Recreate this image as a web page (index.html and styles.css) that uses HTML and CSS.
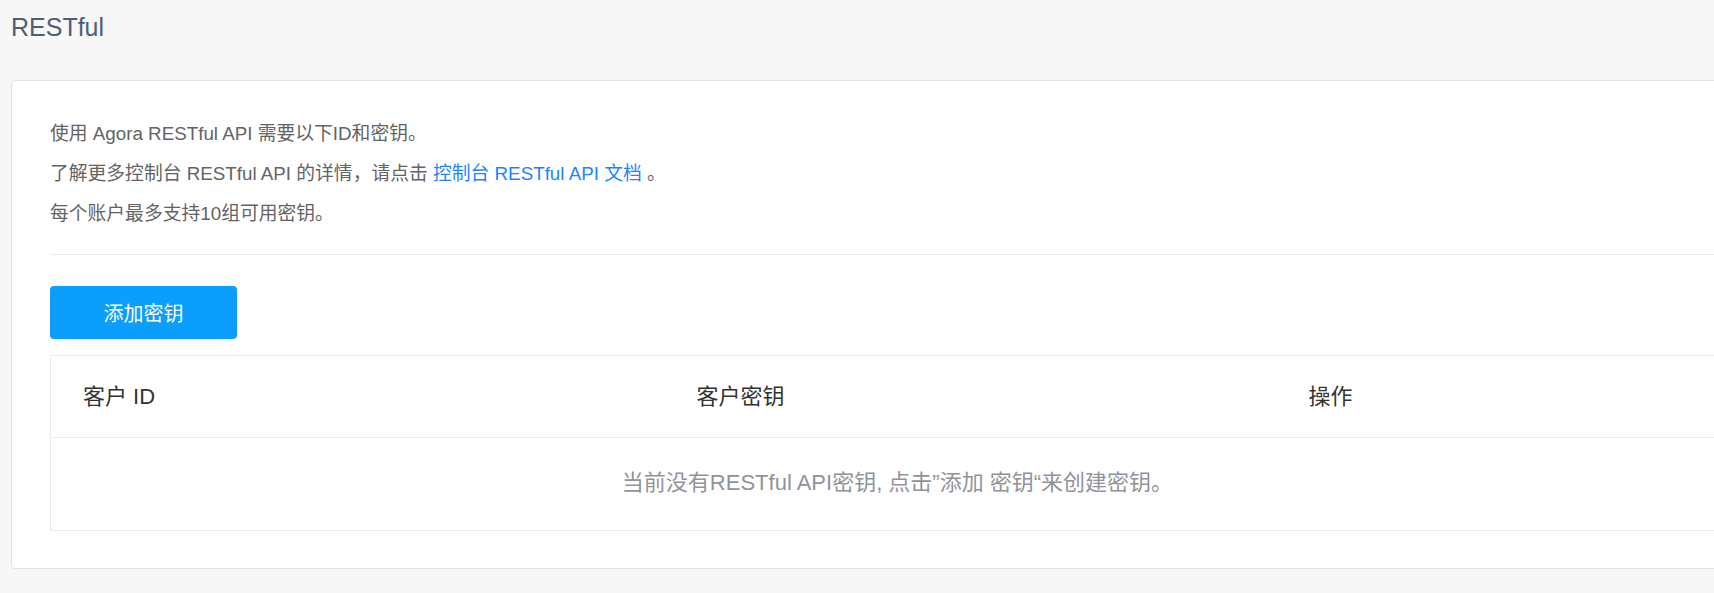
FILE: index.html
```html
<!DOCTYPE html>
<html lang="zh-CN">
<head>
  <meta charset="UTF-8" />
  <meta name="viewport" content="width=device-width, initial-scale=1.0"/>
  <title>RESTful</title>
  <link rel="stylesheet" href="styles.css">
</head>
<body>
  <div class="page">
    <h2 class="page-title">RESTful</h2>

    <div class="card">
      <div class="intro">
        <p>使用 Agora RESTful API 需要以下ID和密钥。</p>
        <p>了解更多控制台 RESTful API 的详情，请点击 <a href="#">控制台 RESTful API 文档</a> 。</p>
        <p>每个账户最多支持10组可用密钥。</p>
      </div>

      <div class="divider"></div>

      <button class="btn-add">添加密钥</button>

      <table class="key-table">
        <colgroup>
          <col class="col-id">
          <col class="col-secret">
          <col class="col-action">
        </colgroup>
        <thead>
          <tr>
            <th>客户 ID</th>
            <th>客户密钥</th>
            <th>操作</th>
          </tr>
        </thead>
        <tbody>
          <tr>
            <td class="empty" colspan="3">当前没有RESTful API密钥, 点击”添加 密钥“来创建密钥。</td>
          </tr>
        </tbody>
      </table>
    </div>
  </div>
</body>
</html>
```

FILE: styles.css
```css
html, body {
  margin: 0;
  overflow: hidden;
}
body {
  font-family: "Liberation Sans", Arial, "Noto Sans CJK SC", sans-serif;
  background: #f7f7f7;
  color: #333;
}
.page {
  width: 1794px;
  padding: 11px 0 24px 11px;
}
.page-title {
  margin: 0 0 37px;
  font-size: 25px;
  line-height: 32px;
  font-weight: normal;
  color: #4f5e78;
}
.card {
  background: #fff;
  border: 1px solid #e2e2e6;
  border-radius: 4px;
  padding: 33px 38px 37px;
}
.intro p {
  margin: 0;
  font-size: 18.8px;
  line-height: 40px;
  color: #636363;
}
.intro a {
  color: #1b85ff;
  text-decoration: none;
}
.divider {
  margin-top: 20px;
  border-top: 1px solid #ececf0;
}
.btn-add {
  display: block;
  margin-top: 31px;
  width: 187px;
  height: 53px;
  border: none;
  border-radius: 4px;
  background: #0b9efd;
  color: #fff;
  font-family: inherit;
  font-size: 20px;
  cursor: pointer;
}
.key-table {
  margin-top: 16px;
  width: 1694px;
  table-layout: fixed;
  border-collapse: collapse;
  border: 1px solid #ebebf1;
}
.col-id { width: 614px; }
.col-secret { width: 612px; }
.col-action { width: 468px; }
.key-table th {
  height: 76px;
  padding: 0 0 5px 32px;
  text-align: left;
  font-size: 22px;
  font-weight: normal;
  color: #333;
  border-bottom: 1px solid #ebebf1;
}
.key-table td.empty {
  height: 84px;
  padding: 0 0 8px;
  text-align: center;
  font-size: 22px;
  color: #909399;
}
```
